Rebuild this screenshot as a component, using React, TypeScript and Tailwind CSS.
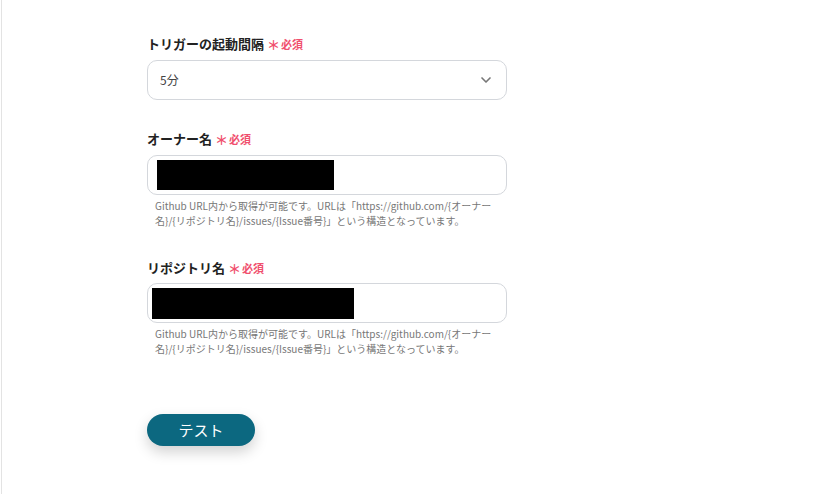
import React from 'react';
import { ChevronDown } from 'lucide-react';

const font = { fontFamily: '"Noto Sans CJK JP", "Noto Sans", sans-serif' };

const Required = () => (
  <span className="ml-[3px] inline-flex items-center text-[11px] font-bold text-[#f0506e]">
    <span className="mr-[1px] text-[13px] leading-none">＊</span>必須
  </span>
);

const Label = ({ children }: { children: React.ReactNode }) => (
  <div className="flex items-center text-[13px] font-bold leading-5 text-[#222]">
    {children}
    <Required />
  </div>
);

const Help = () => (
  <p className="mt-[3px] pl-2 pr-[4px] text-[10px] leading-[15px] text-[#777]">
    Github URL内から取得が可能です。URLは「https://github.com/{'{'}オーナー名{'}'}/{'{'}リポジトリ名{'}'}/issues/{'{'}Issue番号{'}'}」という構造となっています。
  </p>
);

export default function App() {
  return (
    <div className="h-[494px] w-[822px] overflow-hidden bg-white pl-px" style={font}>
      <div className="h-full border-l border-[#e3e3e3] pl-[145px] pt-[34px]">
        <div className="w-[360px]">
          <Label>トリガーの起動間隔</Label>
          <div className="mt-[6px] flex h-10 items-center justify-between rounded-[10px] border border-[#d4d7dc] pl-3 pr-3 text-[12px] text-[#444]">
            <span>5分</span>
            <ChevronDown className="h-4 w-4 text-[#777]" strokeWidth={2.5} />
          </div>

          <div className="mt-[29px]">
            <Label>オーナー名</Label>
          </div>
          <div className="mt-[6px] flex h-10 items-center rounded-[10px] border border-[#d4d7dc] pl-[9px]">
            <div className="h-[30px] w-[177px] bg-black" />
          </div>
          <Help />

          <div className="mt-[30px]">
            <Label>リポジトリ名</Label>
          </div>
          <div className="mt-[5px] flex h-10 items-center rounded-[10px] border border-[#d4d7dc] pl-[4px]">
            <div className="h-[31px] w-[202px] bg-black" />
          </div>
          <Help />

          <button className="mt-[58px] flex h-8 w-[108px] items-center justify-center rounded-full bg-[#0c6880] text-[15px] text-white shadow-[0_6px_14px_rgba(0,0,0,0.18)]">
            テスト
          </button>
        </div>
      </div>
    </div>
  );
}
